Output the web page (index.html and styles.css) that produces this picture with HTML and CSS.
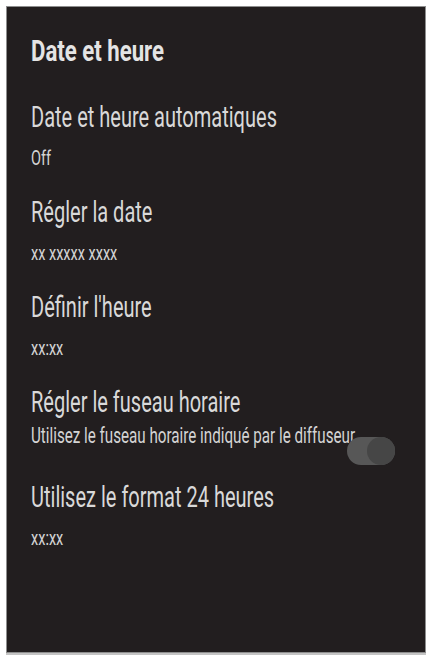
FILE: index.html
```html
<!DOCTYPE html>
<html lang="fr">
<head>
<meta charset="utf-8">
<title>Date et heure</title>
<link rel="stylesheet" href="styles.css">
</head>
<body>
<div class="panel">
  <h1 class="header"><span class="cond cond-bold">Date et heure</span></h1>
  <div class="list">
    <div class="item">
      <div class="title"><span class="cond">Date et heure automatiques</span></div>
      <div class="sub"><span class="cond">Off</span></div>
    </div>
    <div class="item">
      <div class="title"><span class="cond">Régler la date</span></div>
      <div class="sub"><span class="cond">xx xxxxx xxxx</span></div>
    </div>
    <div class="item">
      <div class="title"><span class="cond">Définir l'heure</span></div>
      <div class="sub"><span class="cond">xx:xx</span></div>
    </div>
    <div class="item item-toggle">
      <div class="title"><span class="cond">Régler le fuseau horaire</span></div>
      <div class="sub sub-long"><span class="cond">Utilisez le fuseau horaire indiqué par le diffuseur</span></div>
      <div class="toggle"><div class="thumb"></div></div>
    </div>
    <div class="item">
      <div class="title"><span class="cond">Utilisez le format 24 heures</span></div>
      <div class="sub"><span class="cond">xx:xx</span></div>
    </div>
  </div>
</div>
</body>
</html>
```

FILE: styles.css
```css
html, body {
  margin: 0;
  padding: 0;
  background: #ffffff;
}

body {
  font-family: Roboto, "Liberation Sans", sans-serif;
}

.panel {
  box-sizing: border-box;
  width: 420px;
  height: 647px;
  margin: 6px 2px 3px 6px;
  padding: 26px 24px 0 24px;
  background: #221e1f;
  border: 1px solid #8e8e8e;
  box-shadow: 0 2px 0 #c4c4c4;
  overflow: hidden;
}

.cond {
  display: inline-block;
  white-space: nowrap;
  transform: scaleX(0.69);
  transform-origin: 0 50%;
}

.cond-bold {
  transform: scaleX(0.765);
}

.header {
  margin: 0 0 30px 0;
  font-size: 29px;
  line-height: 36px;
  font-weight: 700;
  color: #e4e4e4;
}

.list {
  display: grid;
  grid-template-columns: minmax(0, 1fr);
  grid-auto-rows: 95px;
}

.item {
  position: relative;
  min-width: 0;
}

.title {
  font-size: 29px;
  line-height: 36px;
  font-weight: 400;
  color: #d9d9d9;
  white-space: nowrap;
}

.sub {
  margin-top: 9px;
  font-size: 21px;
  line-height: 28px;
  font-weight: 400;
  color: #d4d4d4;
  white-space: nowrap;
}

.sub-long {
  margin-top: 2px;
  font-size: 22px;
}

.toggle {
  position: absolute;
  right: 6px;
  top: 53px;
  width: 48px;
  height: 28px;
  border-radius: 14px;
  background: #575757;
  display: flex;
  justify-content: flex-end;
}

.thumb {
  width: 28px;
  height: 28px;
  border-radius: 50%;
  background: #464646;
}
```
